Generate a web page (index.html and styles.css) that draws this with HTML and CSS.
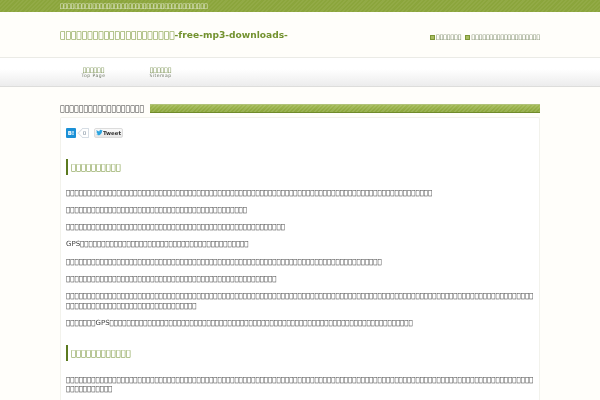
FILE: index.html
```html
<!DOCTYPE html>
<html lang="ja">
<head>
<meta charset="utf-8">
<title>-free-mp3-downloads-</title>
<link rel="stylesheet" href="styles.css">
</head>
<body>
<div class="topbar"><p class="wrap tagline">&#xE000;&#xE000;&#xE000;&#xE000;&#xE000;&#xE000;&#xE000;&#xE000;&#xE000;&#xE000;&#xE000;&#xE000;&#xE000;&#xE000;&#xE000;&#xE000;&#xE000;&#xE000;&#xE000;&#xE000;&#xE000;&#xE000;&#xE000;&#xE000;&#xE000;&#xE000;&#xE000;&#xE000;&#xE000;&#xE000;&#xE000;&#xE000;&#xE000;&#xE000;&#xE000;&#xE000;&#xE000;&#xE000;&#xE000;&#xE000;&#xE000;</p></div>
<header class="wrap masthead">
  <h1 class="site-title">&#xE000;&#xE000;&#xE000;&#xE000;&#xE000;&#xE000;&#xE000;&#xE000;&#xE000;&#xE000;&#xE000;&#xE000;&#xE000;&#xE000;&#xE000;&#xE000;&#xE000;&#xE000;&#xE000;&#xE000;&#xE000;-free-mp3-downloads-</h1>
  <ul class="head-links">
    <li><i class="bullet"></i>&#xE000;&#xE000;&#xE000;&#xE000;&#xE000;&#xE000;&#xE000;</li>
    <li><i class="bullet"></i>&#xE000;&#xE000;&#xE000;&#xE000;&#xE000;&#xE000;&#xE000;&#xE000;&#xE000;&#xE000;&#xE000;&#xE000;&#xE000;&#xE000;&#xE000;&#xE000;&#xE000;&#xE000;&#xE000;</li>
  </ul>
</header>
<nav class="nav">
  <ul class="wrap nav-list">
    <li class="nav-item">&#xE000;&#xE000;&#xE000;&#xE000;&#xE000;&#xE000;<small>Top Page</small></li>
    <li class="nav-item">&#xE000;&#xE000;&#xE000;&#xE000;&#xE000;&#xE000;<small>Sitemap</small></li>
  </ul>
</nav>
<main class="wrap main">
  <div class="page-head">
    <h2 class="page-title">&#xE000;&#xE000;&#xE000;&#xE000;&#xE000;&#xE000;&#xE000;&#xE000;&#xE000;&#xE000;&#xE000;&#xE000;&#xE000;&#xE000;&#xE000;&#xE000;&#xE000;&#xE000;</h2>
    <div class="page-rule"></div>
  </div>
  <article class="card">
    <div class="share">
      <span class="hatena">B!</span>
      <span class="count">0</span>
      <span class="tweet"><svg class="bird" viewBox="0 0 24 24"><path d="M23 5.1c-.8.4-1.700.6-2.600.7.900-.6 1.600-1.400 2-2.500-.9.500-1.900.9-2.900 1.100a4.600 4.600 0 0 0-7.900 4.200C7.800 8.400 4.400 6.600 2.200 3.800c-1.200 2.100-.6 4.800 1.400 6.100-.7 0-1.400-.2-2.100-.6 0 2.200 1.600 4.200 3.700 4.600-.7.200-1.400.2-2.100.1.600 1.900 2.300 3.200 4.300 3.200A9.300 9.300 0 0 1 .6 19.100 13 13 0 0 0 20.700 7.500c.9-.6 1.700-1.400 2.300-2.400z"/></svg>Tweet</span>
    </div>
    <h3 class="sub">&#xE000;&#xE000;&#xE000;&#xE000;&#xE000;&#xE000;&#xE000;&#xE000;&#xE000;&#xE000;</h3>
    <p>&#xE000;&#xE000;&#xE000;&#xE000;&#xE000;&#xE000;&#xE000;&#xE000;&#xE000;&#xE000;&#xE000;&#xE000;&#xE000;&#xE000;&#xE000;&#xE000;&#xE000;&#xE000;&#xE000;&#xE000;&#xE000;&#xE000;&#xE000;&#xE000;&#xE000;&#xE000;&#xE000;&#xE000;&#xE000;&#xE000;&#xE000;&#xE000;&#xE000;&#xE000;&#xE000;&#xE000;&#xE000;&#xE000;&#xE000;&#xE000;&#xE000;&#xE000;&#xE000;&#xE000;&#xE000;&#xE000;&#xE000;&#xE000;&#xE000;&#xE000;&#xE000;&#xE000;&#xE000;&#xE000;&#xE000;&#xE000;&#xE000;&#xE000;&#xE000;&#xE000;&#xE000;&#xE000;&#xE000;&#xE000;&#xE000;&#xE000;&#xE000;&#xE000;&#xE000;&#xE000;&#xE000;&#xE000;&#xE000;&#xE000;&#xE000;&#xE000;&#xE000;&#xE000;&#xE000;&#xE000;&#xE000;&#xE000;&#xE000;&#xE000;&#xE000;&#xE000;&#xE000;</p>
    <p>&#xE000;&#xE000;&#xE000;&#xE000;&#xE000;&#xE000;&#xE000;&#xE000;&#xE000;&#xE000;&#xE000;&#xE000;&#xE000;&#xE000;&#xE000;&#xE000;&#xE000;&#xE000;&#xE000;&#xE000;&#xE000;&#xE000;&#xE000;&#xE000;&#xE000;&#xE000;&#xE000;&#xE000;&#xE000;&#xE000;&#xE000;&#xE000;&#xE000;&#xE000;&#xE000;&#xE000;&#xE000;&#xE000;&#xE000;&#xE000;&#xE000;&#xE000;&#xE000;</p>
    <p>&#xE000;&#xE000;&#xE000;&#xE000;&#xE000;&#xE000;&#xE000;&#xE000;&#xE000;&#xE000;&#xE000;&#xE000;&#xE000;&#xE000;&#xE000;&#xE000;&#xE000;&#xE000;&#xE000;&#xE000;&#xE000;&#xE000;&#xE000;&#xE000;&#xE000;&#xE000;&#xE000;&#xE000;&#xE000;&#xE000;&#xE000;&#xE000;&#xE000;&#xE000;&#xE000;&#xE000;&#xE000;&#xE000;&#xE000;&#xE000;&#xE000;&#xE000;&#xE000;&#xE000;&#xE000;&#xE000;&#xE000;&#xE000;&#xE000;&#xE000;&#xE000;&#xE000;</p>
    <p>GPS&#xE000;&#xE000;&#xE000;&#xE000;&#xE000;&#xE000;&#xE000;&#xE000;&#xE000;&#xE000;&#xE000;&#xE000;&#xE000;&#xE000;&#xE000;&#xE000;&#xE000;&#xE000;&#xE000;&#xE000;&#xE000;&#xE000;&#xE000;&#xE000;&#xE000;&#xE000;&#xE000;&#xE000;&#xE000;&#xE000;&#xE000;&#xE000;&#xE000;&#xE000;&#xE000;&#xE000;&#xE000;&#xE000;&#xE000;&#xE000;</p>
    <p>&#xE000;&#xE000;&#xE000;&#xE000;&#xE000;&#xE000;&#xE000;&#xE000;&#xE000;&#xE000;&#xE000;&#xE000;&#xE000;&#xE000;&#xE000;&#xE000;&#xE000;&#xE000;&#xE000;&#xE000;&#xE000;&#xE000;&#xE000;&#xE000;&#xE000;&#xE000;&#xE000;&#xE000;&#xE000;&#xE000;&#xE000;&#xE000;&#xE000;&#xE000;&#xE000;&#xE000;&#xE000;&#xE000;&#xE000;&#xE000;&#xE000;&#xE000;&#xE000;&#xE000;&#xE000;&#xE000;&#xE000;&#xE000;&#xE000;&#xE000;&#xE000;&#xE000;&#xE000;&#xE000;&#xE000;&#xE000;&#xE000;&#xE000;&#xE000;&#xE000;&#xE000;&#xE000;&#xE000;&#xE000;&#xE000;&#xE000;&#xE000;&#xE000;&#xE000;&#xE000;&#xE000;&#xE000;&#xE000;&#xE000;&#xE000;</p>
    <p>&#xE000;&#xE000;&#xE000;&#xE000;&#xE000;&#xE000;&#xE000;&#xE000;&#xE000;&#xE000;&#xE000;&#xE000;&#xE000;&#xE000;&#xE000;&#xE000;&#xE000;&#xE000;&#xE000;&#xE000;&#xE000;&#xE000;&#xE000;&#xE000;&#xE000;&#xE000;&#xE000;&#xE000;&#xE000;&#xE000;&#xE000;&#xE000;&#xE000;&#xE000;&#xE000;&#xE000;&#xE000;&#xE000;&#xE000;&#xE000;&#xE000;&#xE000;&#xE000;&#xE000;&#xE000;&#xE000;&#xE000;&#xE000;&#xE000;&#xE000;</p>
    <p>&#xE000;&#xE000;&#xE000;&#xE000;&#xE000;&#xE000;&#xE000;&#xE000;&#xE000;&#xE000;&#xE000;&#xE000;&#xE000;&#xE000;&#xE000;&#xE000;&#xE000;&#xE000;&#xE000;&#xE000;&#xE000;&#xE000;&#xE000;&#xE000;&#xE000;&#xE000;&#xE000;&#xE000;&#xE000;&#xE000;&#xE000;&#xE000;&#xE000;&#xE000;&#xE000;&#xE000;&#xE000;&#xE000;&#xE000;&#xE000;&#xE000;&#xE000;&#xE000;&#xE000;&#xE000;&#xE000;&#xE000;&#xE000;&#xE000;&#xE000;&#xE000;&#xE000;&#xE000;&#xE000;&#xE000;&#xE000;&#xE000;&#xE000;&#xE000;&#xE000;&#xE000;&#xE000;&#xE000;&#xE000;&#xE000;&#xE000;&#xE000;&#xE000;&#xE000;&#xE000;&#xE000;&#xE000;&#xE000;&#xE000;&#xE000;&#xE000;&#xE000;&#xE000;&#xE000;&#xE000;&#xE000;&#xE000;&#xE000;&#xE000;&#xE000;&#xE000;&#xE000;&#xE000;&#xE000;&#xE000;&#xE000;&#xE000;&#xE000;&#xE000;&#xE000;&#xE000;&#xE000;&#xE000;&#xE000;&#xE000;&#xE000;&#xE000;&#xE000;&#xE000;&#xE000;&#xE000;&#xE000;&#xE000;&#xE000;&#xE000;&#xE000;&#xE000;&#xE000;&#xE000;&#xE000;&#xE000;&#xE000;&#xE000;&#xE000;&#xE000;&#xE000;&#xE000;&#xE000;&#xE000;&#xE000;&#xE000;&#xE000;&#xE000;&#xE000;&#xE000;&#xE000;&#xE000;&#xE000;&#xE000;&#xE000;&#xE000;&#xE000;&#xE000;&#xE000;&#xE000;&#xE000;&#xE000;</p>
    <p>&#xE000;&#xE000;&#xE000;&#xE000;&#xE000;&#xE000;&#xE000;GPS&#xE000;&#xE000;&#xE000;&#xE000;&#xE000;&#xE000;&#xE000;&#xE000;&#xE000;&#xE000;&#xE000;&#xE000;&#xE000;&#xE000;&#xE000;&#xE000;&#xE000;&#xE000;&#xE000;&#xE000;&#xE000;&#xE000;&#xE000;&#xE000;&#xE000;&#xE000;&#xE000;&#xE000;&#xE000;&#xE000;&#xE000;&#xE000;&#xE000;&#xE000;&#xE000;&#xE000;&#xE000;&#xE000;&#xE000;&#xE000;&#xE000;&#xE000;&#xE000;&#xE000;&#xE000;&#xE000;&#xE000;&#xE000;&#xE000;&#xE000;&#xE000;&#xE000;&#xE000;&#xE000;&#xE000;&#xE000;&#xE000;&#xE000;&#xE000;&#xE000;&#xE000;&#xE000;&#xE000;&#xE000;&#xE000;&#xE000;&#xE000;&#xE000;&#xE000;&#xE000;&#xE000;&#xE000;</p>
    <h3 class="sub sub-next">&#xE000;&#xE000;&#xE000;&#xE000;&#xE000;&#xE000;&#xE000;&#xE000;&#xE000;&#xE000;&#xE000;&#xE000;</h3>
    <p>&#xE000;&#xE000;&#xE000;&#xE000;&#xE000;&#xE000;&#xE000;&#xE000;&#xE000;&#xE000;&#xE000;&#xE000;&#xE000;&#xE000;&#xE000;&#xE000;&#xE000;&#xE000;&#xE000;&#xE000;&#xE000;&#xE000;&#xE000;&#xE000;&#xE000;&#xE000;&#xE000;&#xE000;&#xE000;&#xE000;&#xE000;&#xE000;&#xE000;&#xE000;&#xE000;&#xE000;&#xE000;&#xE000;&#xE000;&#xE000;&#xE000;&#xE000;&#xE000;&#xE000;&#xE000;&#xE000;&#xE000;&#xE000;&#xE000;&#xE000;&#xE000;&#xE000;&#xE000;&#xE000;&#xE000;&#xE000;&#xE000;&#xE000;&#xE000;&#xE000;&#xE000;&#xE000;&#xE000;&#xE000;&#xE000;&#xE000;&#xE000;&#xE000;&#xE000;&#xE000;&#xE000;&#xE000;&#xE000;&#xE000;&#xE000;&#xE000;&#xE000;&#xE000;&#xE000;&#xE000;&#xE000;&#xE000;&#xE000;&#xE000;&#xE000;&#xE000;&#xE000;&#xE000;&#xE000;&#xE000;&#xE000;&#xE000;&#xE000;&#xE000;&#xE000;&#xE000;&#xE000;&#xE000;&#xE000;&#xE000;&#xE000;&#xE000;&#xE000;&#xE000;&#xE000;&#xE000;&#xE000;&#xE000;&#xE000;&#xE000;&#xE000;&#xE000;&#xE000;&#xE000;&#xE000;&#xE000;&#xE000;&#xE000;&#xE000;&#xE000;&#xE000;&#xE000;</p>
  </article>
</main>
</body>
</html>
```
FILE: styles.css
```css
* { box-sizing: border-box; }
html, body { height: 400px; }
body {
  margin: 0;
  background: #fffefa;
  font-family: "DejaVu Sans", sans-serif;
  font-size: 7.020px;
  color: #3e3e3e;
  overflow: hidden;
}
ul { list-style: none; margin: 0; padding: 0; }
.wrap { width: 480px; margin-left: 60px; }
.topbar, .masthead, .nav, .main { filter: blur(.25px); }
.topbar {
  height: 12px;
  background: repeating-linear-gradient(-45deg, #8ba53c 0 1.500px, #92aa46 1.500px 3px);
}
.tagline {
  margin-top: 0;
  margin-bottom: 0;
  font-size: 6px;
  line-height: 12px;
  color: #fff;
}
.masthead {
  height: 45px;
  display: flex;
  justify-content: space-between;
  align-items: flex-start;
}
.site-title {
  margin: 16.500px 0 0;
  font-size: 9.100px;
  line-height: 13px;
  font-weight: bold;
  color: #73922f;
}
.head-links {
  display: flex;
  gap: 4px;
  margin-top: 20px;
  font-size: 6px;
  line-height: 9px;
  color: #50653a;
}
.head-links li { display: flex; align-items: center; gap: 1.300px; }
.bullet {
  display: block;
  width: 5px;
  height: 5px;
  margin-top: 1px;
  background: #a9bd62;
  border: 1.500px solid #7d9636;
}
.nav {
  height: 30px;
  background: linear-gradient(#fff 0 40%, #ececec 100%);
  border-top: 1px solid #ebebe6;
  border-bottom: 1px solid #dddddb;
}
.nav-list { display: flex; }
.nav-item {
  width: 67px;
  padding-top: 8px;
  text-align: center;
  font-size: 6px;
  line-height: 7px;
  color: #4f6f18;
}
.nav-item small {
  display: block;
  font-size: 4.500px;
  line-height: 6px;
  letter-spacing: .5px;
  color: #6c7662;
}
.main { padding-top: 17px; }
.page-head {
  display: flex;
  align-items: center;
  gap: 5.500px;
  height: 9px;
}
.page-title {
  margin: 0;
  font-size: 7.800px;
  line-height: 9px;
  font-weight: normal;
  color: #333;
}
.page-rule {
  flex: 1;
  height: 9px;
  background:
    repeating-linear-gradient(-45deg, rgba(255,255,255,.1) 0 1.500px, transparent 1.500px 3px),
    linear-gradient(#a3ba55, #8fa93f 75%);
  border-top: 1px solid #b0c27a;
  border-bottom: 1px solid #6f8a2a;
}
.card {
  margin-top: 4px;
  height: 283px;
  padding: 9px 4px 0 5px;
  background: #fff;
  border: 1px solid #f2f2ec;
  border-bottom: 0;
  border-radius: 2px 2px 0 0;
}
.share { display: flex; align-items: center; height: 11px; }
.hatena {
  width: 10px;
  height: 10px;
  border-radius: 1px;
  background: #1b90d6;
  color: #fff;
  font-size: 5.500px;
  line-height: 10px;
  font-weight: bold;
  text-align: center;
}
.count {
  position: relative;
  width: 7px;
  height: 10px;
  margin-left: 5.500px;
  border: 1px solid #d6dde4;
  border-left: 0;
  border-radius: 0 1px 1px 0;
  font-size: 5.500px;
  line-height: 8px;
  text-align: center;
  color: #7a8a9a;
}
.count::before {
  content: "";
  position: absolute;
  left: -2.500px;
  top: 1.700px;
  width: 4.500px;
  height: 4.500px;
  transform: rotate(45deg);
  border-left: 1px solid #d6dde4;
  border-bottom: 1px solid #d6dde4;
}
.tweet {
  display: flex;
  align-items: center;
  height: 10px;
  margin-left: 5px;
  padding: 0 1.500px;
  border: 1px solid #dcdcdc;
  border-radius: 2px;
  background: linear-gradient(#fafafa, #e6e6e6);
  font-size: 5.400px;
  font-weight: bold;
  line-height: 8px;
  color: #333;
}
.bird { width: 7px; height: 7px; fill: #2ba4e0; }
.sub {
  margin: 21px 0 12.700px;
  height: 16px;
  padding-left: 3px;
  border-left: 2.500px solid #5b7a1f;
  font-size: 8.300px;
  line-height: 16px;
  font-weight: normal;
  color: #6f8e2c;
}
.sub-next { margin-top: 17.900px; margin-bottom: 13.700px; }
.card p {
  margin: 0 0 7.800px;
  line-height: 9.450px;
  word-break: break-all;
  overflow-wrap: anywhere;
}
```
